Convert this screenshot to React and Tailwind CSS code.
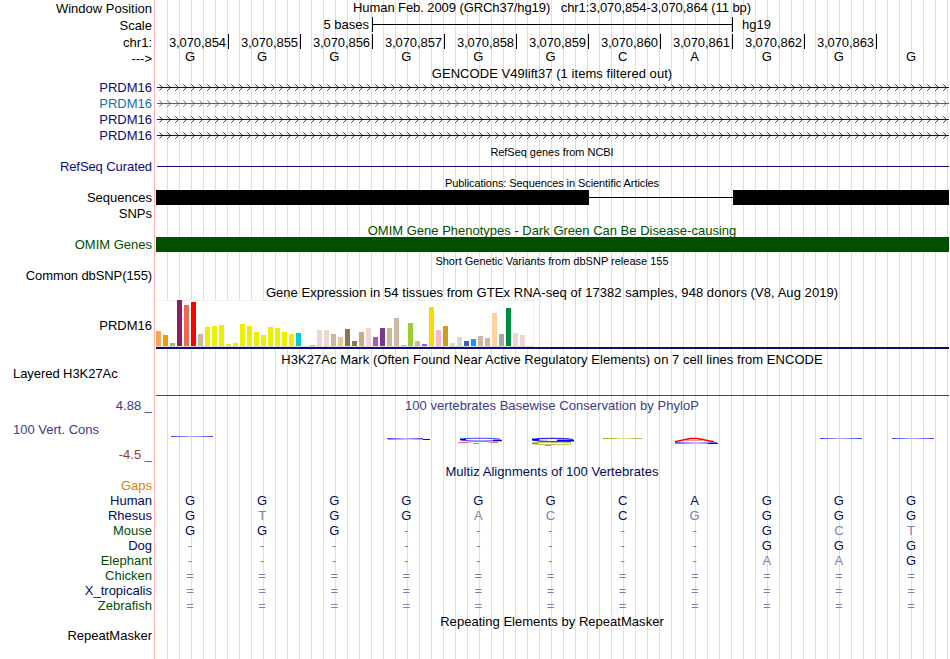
import React from "react";

const NAVY = "text-[#0c0c78]";
const DARK = "text-[#000c60]";
const GREEN = "text-[#005000]";
const PHYLO = "text-[#3c3c8c]";

// One horizontal band of the browser: label on the left, track on the right.
function Row({ h, label, labelClass = "", children, trackClass = "" }) {
  return (
    <div className={`flex ${h}`}>
      <div className={`flex w-[155px] shrink-0 items-center justify-end pr-[3px] ${labelClass}`}>{label}</div>
      <div className={`min-w-0 flex-1 ${trackClass}`}>{children}</div>
    </div>
  );
}

function Title({ h, children, className = "", label, labelClass }) {
  return (
    <Row h={h} label={label} labelClass={labelClass} trackClass={`flex items-center justify-center ${className}`}>
      {children}
    </Row>
  );
}

function Bases({ seq, strong = "text-black", pt = "" }) {
  return (
    <div className={`-ml-px grid h-full w-[793px] grid-cols-11 ${pt}`}>
      {seq.split("").map((c, i) => (
        <span
          key={i}
          className={`flex items-center justify-center ${/[a-z=-]/.test(c) ? "text-[#8080b0]" : strong}`}
        >
          {c.toUpperCase()}
        </span>
      ))}
    </div>
  );
}

function Transcript({ color }) {
  const strong = [];
  const faint = [];
  for (let x = 5; x < 794; x += 8) {
    strong.push(`M${x} 5h1v1h-1zM${x + 1} 6h1v1h-1zM${x + 1} 8h1v1h-1zM${x} 9h1v1h-1z`);
    faint.push(`M${x - 1} 4h1v1h-1zM${x - 1} 10h1v1h-1z`);
  }
  return (
    <svg width="794" height="16" viewBox="0 0 794 16" shapeRendering="crispEdges" className="block" fill={color}>
      <path d={strong.join("")} fillOpacity="0.85" />
      <path d={faint.join("")} fillOpacity="0.5" />
      <rect x="2" y="7" width="792" height="1" />
    </svg>
  );
}

const GTEX = [
  [15, "#ffa54f"], [11, "#ee9a00"], [3, "#8fbc8f"], [46, "#8b1c62"], [41, "#ee6a50"], [44, "#ff0000"],
  [12, "#cdb79e"], [19, "#eeee00"], [20, "#eeee00"], [21, "#eeee00"], [2, "#eeee00"], [3, "#eeee00"],
  [22, "#eeee00"], [20, "#eeee00"], [14, "#eeee00"], [11, "#eeee00"], [19, "#eeee00"], [18, "#eeee00"],
  [14, "#eeee00"], [12, "#eeee00"], [13, "#00cdcd"], [0, "#ee82ee"], [1, "#9ac0cd"], [16, "#eed5d2"],
  [16, "#eed5d2"], [12, "#cdb79e"], [9, "#eec591"], [17, "#8b7355"], [5, "#8b7355"], [14, "#cdaa7d"],
  [18, "#eed5d2"], [9, "#b452cd"], [18, "#7a378b"], [18, "#cdb79e"], [28, "#cdb79e"], [1, "#cdb79e"],
  [23, "#9acd32"], [5, "#cdb79e"], [2, "#7a67ee"], [39, "#ffd700"], [16, "#ffb6c1"], [20, "#cd9b1d"],
  [3, "#b4eeb4"], [9, "#d9d9d9"], [5, "#3a5fcd"], [7, "#1e90ff"], [10, "#cdb79e"], [8, "#cdb79e"],
  [33, "#ffd39b"], [12, "#a6a6a6"], [38, "#008b45"], [13, "#eed5d2"], [11, "#eed5d2"], [0, "#ff00ff"],
];

function Expression() {
  return (
    <svg width="794" height="49" viewBox="0 0 794 49" shapeRendering="crispEdges" className="block">
      <rect x="1" y="0" width="378" height="47" fill="#f0f0f0" />
      <rect x="1" y="1" width="377" height="45" fill="#ffffff" />
      <rect x="1" y="46" width="378" height="1" fill="#dcdcdc" />
      {GTEX.map(([v, c], i) => (
        <rect key={i} x={1 + i * 7} y={46 - v} width="5" height={v} fill={c} />
      ))}
      <rect x="1" y="47" width="793" height="2" fill="#0c0c78" />
    </svg>
  );
}

// Sequence logo letters flattened by their low scores.
function Logo() {
  return (
    <svg width="794" height="50" viewBox="155 413 794 50" className="block" fill="none">
      <defs>
        <linearGradient id="blue">
          <stop offset="0" stopColor="#3c3cff" />
          <stop offset="0.5" stopColor="#b4b4ff" />
          <stop offset="1" stopColor="#3c3cff" />
        </linearGradient>
        <linearGradient id="olive">
          <stop offset="0" stopColor="#a0a000" />
          <stop offset="0.5" stopColor="#e4e4a4" />
          <stop offset="1" stopColor="#b4b43c" />
        </linearGradient>
      </defs>
      <rect x="171" y="436" width="42" height="1" fill="url(#blue)" />
      <rect x="387" y="438" width="36" height="1" fill="url(#blue)" />
      <rect x="388" y="439" width="42" height="1" fill="url(#blue)" opacity="0.6" />
      <rect x="423" y="439" width="7" height="1" fill="#0000ff" />
      <g>
        <path d="M500 439.2C494 438 466 437.8 460 439.2C459 441 482 441.5 497 440.6" stroke="#3c3cff" strokeWidth="1" />
        <path d="M460 439.5h6M493 440.5h9" stroke="#0000ff" strokeWidth="1.6" />
        <path d="M458 442.5h8l8-1h12l6 1h6" stroke="#ff5a5a" strokeWidth="0.9" />
        <rect x="473" y="443" width="6" height="1" fill="#00ff00" />
      </g>
      <g>
        <path d="M573 439.5C567 438 538 437.8 533 439.4C532 441.4 555 442 571 441.2" stroke="#2828ff" strokeWidth="1.2" />
        <path d="M532 439.7h7M557 440.7h17" stroke="#0000ff" strokeWidth="1.7" />
        <path d="M571 442.6C560 442 534 442 532 443.5C540 445 560 445 571 444.2" stroke="#b4b43c" strokeWidth="0.9" />
        <path d="M532 443.5h6" stroke="#a0a000" strokeWidth="1.6" />
        <rect x="545" y="445" width="6" height="1" fill="#00ff00" />
      </g>
      <rect x="603" y="438" width="39" height="1" fill="url(#olive)" />
      <rect x="675" y="442" width="42" height="2" fill="url(#blue)" opacity="0.8" />
      <rect x="708" y="443" width="10" height="1" fill="#0000ff" />
      <path d="M675 441.8L690 438.6H697L714 441.8" stroke="#ff0000" strokeWidth="1.5" />
      <path d="M684 440.5h20" stroke="#ff8080" strokeWidth="0.8" />
      <rect x="820" y="438" width="42" height="1" fill="url(#blue)" />
      <rect x="892" y="438" width="42" height="1" fill="url(#blue)" />
    </svg>
  );
}

const POSITIONS = [854, 855, 856, 857, 858, 859, 860, 861, 862, 863];

const SPECIES = [
  ["Human", DARK, "GGGGGGCAGGG"],
  ["Rhesus", DARK, "GtGGacCgGGG"],
  ["Mouse", GREEN, "GGG-----Gct"],
  ["Dog", DARK, "--------GGG"],
  ["Elephant", GREEN, "--------aaG"],
  ["Chicken", GREEN, "==========="],
  ["X_tropicalis", DARK, "==========="],
  ["Zebrafish", GREEN, "==========="],
];

export default function App() {
  return (
    <div className="h-[659px] w-[950px] overflow-hidden bg-white">
      <div className="h-[659px] w-[949px] overflow-hidden whitespace-pre font-['Liberation_Sans',Arial,sans-serif] text-[13px] leading-none text-black [background:linear-gradient(#ffb4b4,#ffb4b4)_154px_0/1px_100%_no-repeat,repeating-linear-gradient(to_right,transparent_0_11px,#dcdcf8_11px_12px)_156px_0/793px_100%_no-repeat]">
        <Title h="h-4" label="Window Position" className="pb-px tracking-[-0.08px]">
          {"Human Feb. 2009 (GRCh37/hg19)   chr1:3,070,854-3,070,864 (11 bp)"}
        </Title>
        <Row h="h-[17px]" label="Scale" labelClass="pt-0.5" trackClass="flex items-center">
          <span className="w-[214px] text-right">5 bases</span>
          <div className="ml-[3px] flex h-[15px] w-[361px] items-center border-x border-black">
            <div className="h-px w-full bg-black" />
          </div>
          <span className="ml-[9px]">hg19</span>
        </Row>
        <Row h="h-4" label="chr1:" labelClass="pt-[3px]" trackClass="flex pl-[2px] pt-px">
          {POSITIONS.map((p) => (
            <div key={p} className="flex h-[15px] w-[72px] items-center justify-end border-r border-black pr-[2px] pt-0.5 tracking-[-0.08px]">
              3,070,{p}
            </div>
          ))}
        </Row>
        <Row h="h-4" label="--->" labelClass="pt-0.5">
          <Bases seq="GGGGGGCAGGG" pt="pb-0.5" />
        </Row>
        <Title h="h-[15px]" className="pt-0.5 tracking-[0.05px]">GENCODE V49lift37 (1 items filtered out)</Title>
        <Row h="h-4" label="PRDM16" labelClass={`pb-0.5 ${NAVY}`}><Transcript color="#0c0c78" /></Row>
        <Row h="h-4" label="PRDM16" labelClass="pb-0.5 text-[#1570b0]"><Transcript color="#1570b0" /></Row>
        <Row h="h-4" label="PRDM16" labelClass={`pb-0.5 ${NAVY}`}><Transcript color="#0c0c78" /></Row>
        <Row h="h-4" label="PRDM16" labelClass={`pb-0.5 ${NAVY}`}><Transcript color="#0c0c78" /></Row>
        <Title h="h-[15px]" className="pt-0.5 text-[11px] tracking-[-0.04px]">RefSeq genes from NCBI</Title>
        <Row h="h-4" label="RefSeq Curated" labelClass={`pb-0.5 tracking-[-0.08px] ${NAVY}`} trackClass="pl-[2px] pt-[7px]">
          <div className="h-px bg-[#0c0c78]" />
        </Row>
        <Title h="h-[15px]" className="pt-0.5 text-[11px] tracking-[-0.08px]">Publications: Sequences in Scientific Articles</Title>
        <Row h="h-[15px]" label="Sequences" labelClass="pb-px" trackClass="flex items-center pl-px">
          <div className="h-full w-[433px] bg-black" />
          <div className="h-px w-[144px] bg-black" />
          <div className="h-full flex-1 bg-black" />
        </Row>
        <Row h="h-[17px]" label="SNPs" labelClass="pb-px" />
        <Title h="h-[15px]" className={`pt-0.5 ${GREEN}`}>OMIM Gene Phenotypes - Dark Green Can Be Disease-causing</Title>
        <Row h="h-[15px]" label="OMIM Genes" labelClass={`pb-px ${GREEN}`} trackClass="pl-px">
          <div className="h-full bg-[#005000]" />
        </Row>
        <Title h="h-4" className="pt-0.5 text-[11px]">Short Genetic Variants from dbSNP release 155</Title>
        <Row h="h-4" label="Common dbSNP(155)" labelClass="pb-0.5 tracking-[-0.1px]" />
        <Title h="h-4" className="pt-px tracking-[0.055px]">
          Gene Expression in 54 tissues from GTEx RNA-seq of 17382 samples, 948 donors (V8, Aug 2019)
        </Title>
        <Row h="h-[49px]" label="PRDM16" labelClass="pt-0.5"><Expression /></Row>
        <Title h="h-[17px]" className="pt-1 tracking-[0.045px]">
          H3K27Ac Mark (Often Found Near Active Regulatory Elements) on 7 cell lines from ENCODE
        </Title>
        <div className="flex h-[30px] items-start">
          <div className="w-[156px] pl-[13px] pt-px tracking-[-0.06px]">Layered H3K27Ac</div>
          <div className="mt-[29px] h-px flex-1 bg-[#3c3cb4]" />
        </div>
        <Title h="h-[17px]" label="4.88 _" labelClass={`pt-0.5 ${PHYLO}`} className={`pt-0.5 tracking-[0.04px] ${PHYLO}`}>
          100 vertebrates Basewise Conservation by PhyloP
        </Title>
        <div className="flex h-[50px]">
          <div className="flex w-[155px] flex-col pr-[3px]">
            <span className={`pl-[13px] pt-[10px] ${PHYLO}`}>100 Vert. Cons</span>
            <span className="pt-3 text-right text-[#8c3c3c]">-4.5 _</span>
          </div>
          <Logo />
        </div>
        <Title h="h-[15px]" className={`pt-0.5 tracking-[0.06px] ${DARK}`}>Multiz Alignments of 100 Vertebrates</Title>
        <Row h="h-[15px]" label="Gaps" labelClass="text-[#e08200]" />
        {SPECIES.map(([name, color, seq]) => (
          <Row key={name} h="h-[15px]" label={name} labelClass={color}>
            <Bases seq={seq} strong={DARK} pt="pb-px" />
          </Row>
        ))}
        <Title h="h-[15px]" className="pt-0.5 tracking-[0.03px]">Repeating Elements by RepeatMasker</Title>
        <Row h="h-[15px]" label="RepeatMasker" />
      </div>
    </div>
  );
}
